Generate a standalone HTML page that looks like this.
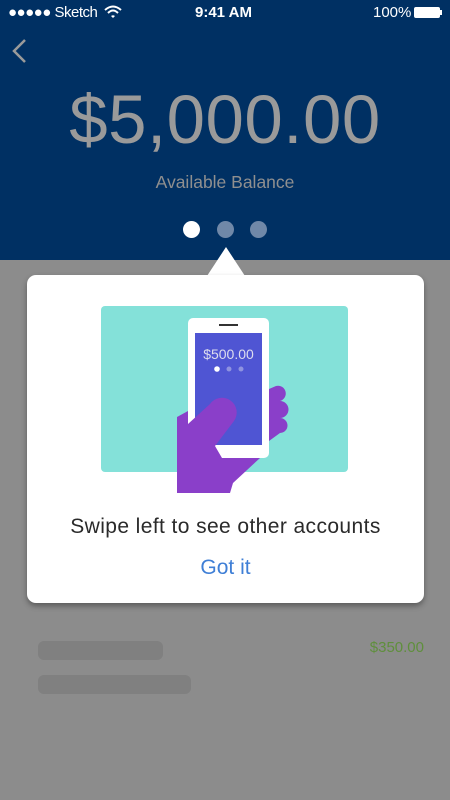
<!DOCTYPE html>
<html><head><meta charset="utf-8"><style>
*{margin:0;padding:0;box-sizing:border-box}
body{width:450px;height:800px;overflow:hidden;background:#8c8c8c;font-family:"Liberation Sans",sans-serif;position:relative}
.hdr{position:absolute;left:0;top:0;width:450px;height:260px;background:#003063}
.t{position:absolute;white-space:nowrap}
</style></head><body>
<div class="hdr"></div>
<div class="t" style="left:8px;top:4px;color:#fff;font-size:15px;letter-spacing:-0.5px">●●●●● Sketch</div>
<svg style="position:absolute;left:104px;top:5px" width="18" height="14" viewBox="0 0 18 14"><path d="M1 5 Q9 -2 17 5" stroke="#fff" stroke-width="2" fill="none"/><path d="M4 8 Q9 3 14 8" stroke="#fff" stroke-width="2" fill="none"/><path d="M7 11 L9 13 L11 11 Q9 9.5 7 11Z" fill="#fff"/></svg>
<div class="t" style="left:195px;top:4px;color:#fff;font-size:15px;font-weight:bold">9:41 AM</div>
<div class="t" style="left:373px;top:4px;color:#fff;font-size:15px">100%</div>
<div style="position:absolute;left:414px;top:7px;width:26px;height:11px;background:#fff;border-radius:2px"></div>
<div style="position:absolute;left:440px;top:10px;width:2px;height:5px;background:#fff"></div>
<svg style="position:absolute;left:10px;top:38px" width="18" height="26"><path d="M15 2 L4 13 L15 24" stroke="#9a9a9a" stroke-width="2.5" fill="none"/></svg>
<div class="t" style="left:0;width:450px;text-align:center;top:80px;color:#9a9a9a;font-size:69px;letter-spacing:0.5px">$5,000.00</div>
<div class="t" style="left:0;width:450px;text-align:center;top:172px;color:#8f8f8f;font-size:17.5px">Available Balance</div>
<div style="position:absolute;left:183px;top:221px;width:17px;height:17px;border-radius:50%;background:#fff"></div>
<div style="position:absolute;left:217px;top:221px;width:17px;height:17px;border-radius:50%;background:#7088a8"></div>
<div style="position:absolute;left:250px;top:221px;width:17px;height:17px;border-radius:50%;background:#7088a8"></div>
<svg style="position:absolute;left:205px;top:247px" width="42" height="30"><path d="M21 0 L40 29 L2 29Z" fill="#fff"/></svg>
<div style="position:absolute;left:27px;top:275px;width:397px;height:328px;background:#fff;border-radius:9px;box-shadow:0 3px 6px rgba(0,0,0,.35)"></div>
<svg style="position:absolute;left:0;top:0" width="450" height="520">
<rect x="101" y="306" width="247" height="166" rx="4" fill="#84e1d9"/>
<rect x="188" y="318" width="81" height="140" rx="5" fill="#fff"/>
<rect x="195" y="333" width="67" height="112" fill="#4f55d3"/>
<rect x="219" y="324" width="19" height="2" fill="#333"/>
<circle cx="217" cy="369" r="2.8" fill="#fff"/><circle cx="229" cy="369" r="2.5" fill="#8f93e0"/><circle cx="241" cy="369" r="2.5" fill="#8f93e0"/>
<text x="228.5" y="359" text-anchor="middle" font-size="14" fill="#dde" font-family="Liberation Sans">$500.00</text>
<path d="M269 389 L276 386 A7 7 0 0 1 280 401 A7 7 0 0 1 280 418 A7 7 0 0 1 280 433 L269 441Z" fill="#8a3fc9"/>
<path d="M177 417 L188 411 L188 424 L210 404 A13 13 0 0 1 234 421 L215 446 L222 458 L260 458 L233 483 L230 493 L177 493Z" fill="#8a3fc9"/>
</svg>
<div class="t" style="left:27px;width:397px;text-align:center;top:515px;color:#2a2a2a;font-size:21px;letter-spacing:0.4px">Swipe left to see other accounts</div>
<div class="t" style="left:27px;width:397px;text-align:center;top:556px;color:#3f7fd6;font-size:21px">Got it</div>
<div style="position:absolute;left:38px;top:641px;width:125px;height:19px;border-radius:6px;background:#808080"></div>
<div style="position:absolute;left:38px;top:675px;width:153px;height:19px;border-radius:6px;background:#808080"></div>
<div class="t" style="right:26px;top:639px;color:#5f8f3c;font-size:15px">$350.00</div>
</body></html>
